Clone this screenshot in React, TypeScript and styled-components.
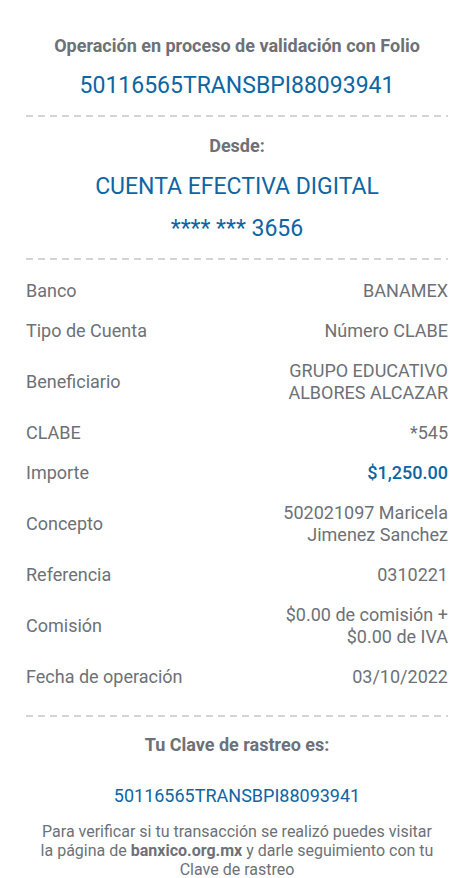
import React from "react";
import styled, { createGlobalStyle } from "styled-components";

const GlobalStyle = createGlobalStyle`
  html, body {
    margin: 0;
    padding: 0;
    background: #ffffff;
  }
  body {
    font-family: Roboto, "Noto Sans", Arial, sans-serif;
    -webkit-font-smoothing: antialiased;
  }
`;

const BLUE = "#0d66a3";
const GRAY = "#6d7177";

const Page = styled.main`
  width: 474px;
  min-height: 878px;
  box-sizing: border-box;
  padding: 34px 26px 0 26px;
  display: flex;
  flex-direction: column;
  background: #fff;
`;

const Section = styled.section`
  display: flex;
  flex-direction: column;
  align-items: center;
  text-align: center;
`;

const Heading = styled.h2`
  margin: 0;
  font-size: 18px;
  line-height: 24px;
  font-weight: 700;
  color: ${GRAY};
`;

const BigBlue = styled.div<{ $mt?: number }>`
  margin-top: ${(p) => p.$mt ?? 0}px;
  font-size: 23px;
  line-height: 30px;
  font-weight: 400;
  color: ${BLUE};
`;

const Divider = styled.hr<{ $mt: number; $mb: number }>`
  width: 100%;
  height: 2px;
  border: 0;
  margin: ${(p) => p.$mt}px 0 ${(p) => p.$mb}px 0;
  background-image: repeating-linear-gradient(
    to right,
    #d3d4d6 0 7px,
    transparent 7px 12px
  );
`;

const Details = styled.dl`
  margin: 0;
  display: flex;
  flex-direction: column;
`;

const Row = styled.div`
  display: flex;
  justify-content: space-between;
  align-items: center;
  padding: 9px 0;
  gap: 16px;
`;

const Label = styled.dt`
  font-size: 18px;
  line-height: 22px;
  color: ${GRAY};
  white-space: nowrap;
`;

const Value = styled.dd<{ $accent?: boolean }>`
  margin: 0;
  font-size: 18px;
  line-height: 22px;
  text-align: right;
  color: ${(p) => (p.$accent ? BLUE : GRAY)};
  font-weight: ${(p) => (p.$accent ? 500 : 400)};
`;

const TrackCode = styled.div`
  margin-top: 27px;
  font-size: 18px;
  line-height: 24px;
  color: ${BLUE};
`;

const Note = styled.p`
  margin: 14px 0 0 0;
  font-size: 16px;
  line-height: 19px;
  color: ${GRAY};
  text-align: center;

  strong {
    font-weight: 700;
  }
`;

const rows: { label: string; value: React.ReactNode; accent?: boolean }[] = [
  { label: "Banco", value: "BANAMEX" },
  { label: "Tipo de Cuenta", value: "Número CLABE" },
  {
    label: "Beneficiario",
    value: (
      <>
        GRUPO EDUCATIVO
        <br />
        ALBORES ALCAZAR
      </>
    ),
  },
  { label: "CLABE", value: "*545" },
  { label: "Importe", value: "$1,250.00", accent: true },
  {
    label: "Concepto",
    value: (
      <>
        502021097 Maricela
        <br />
        Jimenez Sanchez
      </>
    ),
  },
  { label: "Referencia", value: "0310221" },
  {
    label: "Comisión",
    value: (
      <>
        $0.00 de comisión +
        <br />
        $0.00 de IVA
      </>
    ),
  },
  { label: "Fecha de operación", value: "03/10/2022" },
];

export default function App() {
  return (
    <>
      <GlobalStyle />
      <Page>
        <Section>
          <Heading>Operación en proceso de validación con Folio</Heading>
          <BigBlue $mt={13}>50116565TRANSBPI88093941</BigBlue>
        </Section>
        <Divider $mt={14} $mb={17} />
        <Section>
          <Heading>Desde:</Heading>
          <BigBlue $mt={14}>CUENTA EFECTIVA DIGITAL</BigBlue>
          <BigBlue $mt={12}>**** *** 3656</BigBlue>
        </Section>
        <Divider $mt={14} $mb={11} />
        <Details>
          {rows.map((r) => (
            <Row key={r.label}>
              <Label>{r.label}</Label>
              <Value $accent={r.accent}>{r.value}</Value>
            </Row>
          ))}
        </Details>
        <Divider $mt={18} $mb={16} />
        <Section>
          <Heading>Tu Clave de rastreo es:</Heading>
          <TrackCode>50116565TRANSBPI88093941</TrackCode>
          <Note>
            Para verificar si tu transacción se realizó puedes visitar
            <br />
            la página de <strong>banxico.org.mx</strong> y darle seguimiento con tu
            <br />
            Clave de rastreo
          </Note>
        </Section>
      </Page>
    </>
  );
}
